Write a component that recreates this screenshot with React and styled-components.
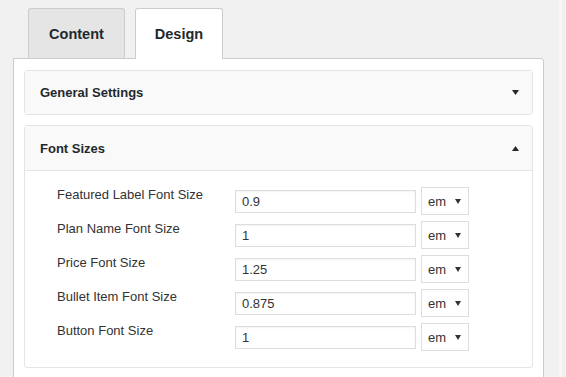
import React from "react";
import styled, { createGlobalStyle } from "styled-components";

const GlobalStyle = createGlobalStyle`
  html, body {
    margin: 0;
    padding: 0;
    background: #f1f1f1;
    overflow: hidden;
  }
  body {
    font-family: "Liberation Sans", Arial, sans-serif;
    color: #333;
  }
`;

const Page = styled.div`
  display: flex;
  width: 566px;
  height: 377px;
  overflow: hidden;
`;

const Main = styled.div`
  width: 559px;
  box-sizing: border-box;
  padding: 8px 15px 0 13px;
`;

const Strip = styled.div`
  width: 3px;
  background: #f7f7f7;
`;

const TabRow = styled.div`
  display: flex;
  align-items: flex-end;
  gap: 10px;
  padding-left: 15px;
`;

const Tab = styled.div`
  box-sizing: border-box;
  width: ${(p) => p.$width}px;
  height: ${(p) => (p.$active ? "51px" : "50px")};
  margin-bottom: ${(p) => (p.$active ? "-1px" : "0")};
  padding-bottom: ${(p) => (p.$active ? "1px" : "0")};
  display: flex;
  align-items: center;
  justify-content: center;
  border: 1px solid #ccc;
  border-bottom: none;
  border-radius: 3px 3px 0 0;
  background: ${(p) => (p.$active ? "#fff" : "#e5e5e5")};
  font-size: 14.5px;
  font-weight: bold;
  color: #23282d;
  position: relative;
  z-index: 1;
`;

const Panel = styled.div`
  background: #fff;
  border: 1px solid #ccc;
  border-radius: 0 3px 0 0;
  padding: 11px 10px 20px;
  min-height: 340px;
  display: flex;
  flex-direction: column;
  gap: 10px;
`;

const Section = styled.div`
  border: 1px solid #e5e5e5;
  border-radius: 3px;
  background: #fff;
`;

const SectionHeader = styled.div`
  height: ${(p) => p.$height}px;
  display: flex;
  align-items: center;
  justify-content: space-between;
  padding: 0 13px 0 15px;
  background: #f9f9f9;
  font-size: 13px;
  font-weight: bold;
  color: #23282d;
`;

const SectionBody = styled.div`
  border-top: 1px solid #e5e5e5;
  padding: 16px 0 16px 32px;
  display: flex;
  flex-direction: column;
  gap: 6px;
`;

const Row = styled.div`
  display: flex;
  height: 28px;
`;

const Label = styled.div`
  width: 178px;
  font-size: 13px;
  line-height: 15px;
  color: #333;
`;

const Input = styled.input`
  box-sizing: border-box;
  align-self: center;
  width: 181px;
  height: 23px;
  margin: 0 5px 0 0;
  padding: 0 6px;
  border: 1px solid #ddd;
  box-shadow: inset 0 1px 2px rgba(0, 0, 0, 0.05);
  font-family: "Liberation Sans", Arial, sans-serif;
  font-size: 13px;
  color: #333;
  outline: none;
`;

const Select = styled.div`
  box-sizing: border-box;
  width: 48px;
  height: 28px;
  border: 1px solid #ddd;
  display: flex;
  align-items: center;
  justify-content: space-between;
  padding: 0 7px 0 6px;
  font-size: 13px;
  color: #333;
  background: #fff;
`;

const Arrow = ({ up, w = 7, h = 5, color = "#23282d" }) => (
  <svg width={w} height={h} viewBox={`0 0 ${w} ${h}`}>
    <polygon
      points={up ? `0,${h} ${w / 2},0 ${w},${h}` : `0,0 ${w},0 ${w / 2},${h}`}
      fill={color}
    />
  </svg>
);

const rows = [
  ["Featured Label Font Size", "0.9"],
  ["Plan Name Font Size", "1"],
  ["Price Font Size", "1.25"],
  ["Bullet Item Font Size", "0.875"],
  ["Button Font Size", "1"],
];

const App = () => {
  return (
    <Page>
      <GlobalStyle />
      <Main>
        <TabRow>
          <Tab $width={97}>Content</Tab>
          <Tab $width={88} $active>
            Design
          </Tab>
        </TabRow>
        <Panel>
          <Section>
            <SectionHeader $height={43}>
              General Settings
              <Arrow />
            </SectionHeader>
          </Section>
          <Section>
            <SectionHeader $height={44}>
              Font Sizes
              <Arrow up />
            </SectionHeader>
            <SectionBody>
              {rows.map(([label, value]) => (
                <Row key={label}>
                  <Label>{label}</Label>
                  <Input defaultValue={value} />
                  <Select>
                    em
                    <Arrow w={6} h={5} color="#333" />
                  </Select>
                </Row>
              ))}
            </SectionBody>
          </Section>
        </Panel>
      </Main>
      <Strip />
    </Page>
  );
};

export default App;
